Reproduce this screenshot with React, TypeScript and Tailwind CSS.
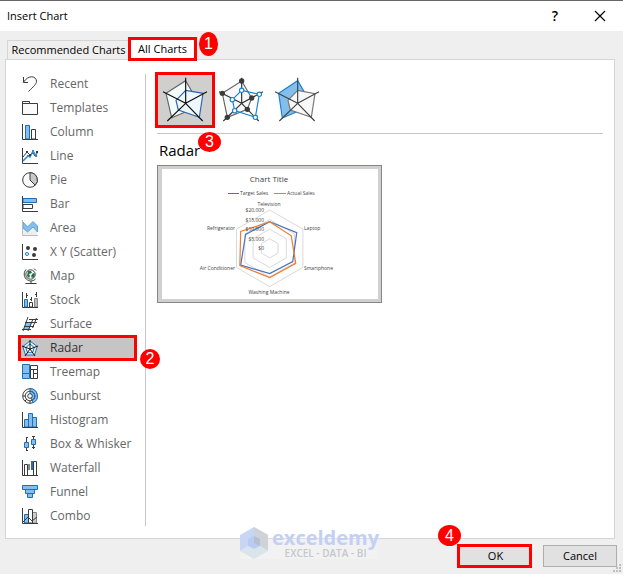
import clsx from "clsx";
import { useState, type ReactNode } from "react";

const INK = "#3b3b3b";
const BLUE = "#1e6fb8";
const SKY = "#83beec";

const chartTypes: { name: string; icon: ReactNode }[] = [
  {
    name: "Recent",
    icon: <path d="M1.500 1v5.500H6M1.500 6.200C4 2.500 7 .8 9.500.8c3 0 5 2 5 4.400 0 3-3 5.300-8 10.300" />,
  },
  {
    name: "Templates",
    icon: (
      <>
        <path d="M.5 1.500h7v2h8v11H.5z" fill="#fafafa" />
        <path d="M.5 3.500h7" />
      </>
    ),
  },
  {
    name: "Column",
    icon: (
      <>
        <path d="M3.500 15V1.500h4V15z" fill={SKY} stroke={BLUE} />
        <path d="M9.500 15V5.500h4V15z" fill="#fff" />
        <path d="M.5 0v15.500H16" />
      </>
    ),
  },
  {
    name: "Line",
    icon: (
      <>
        <path d="m1 9 4-5 3 3 3-2 2 3 3-4" />
        <path d="m1 13 5-5 2 1 3-6 3 5 1-1" stroke="#2b8bd6" strokeWidth="1.5" />
        <path d="M4 3h2v2H4zM7 6h2v2H7zM14 3h2v2h-2z" fill={INK} stroke="none" />
        <path d="M5 7h2v2H5zM10 2h2v2h-2zM13 7h2v2h-2z" fill="#2b8bd6" stroke="none" />
        <path d="M.5 0v15.500H16" />
      </>
    ),
  },
  {
    name: "Pie",
    icon: (
      <>
        <circle cx="8" cy="8" r="7.300" fill="#fafafa" />
        <path d="M8 .7V8l5.200 5.200A7.300 7.300 0 0 0 8 .7z" fill="#c8c8c8" />
      </>
    ),
  },
  {
    name: "Bar",
    icon: (
      <>
        <path d="M1 2.500h13.500v4H1z" fill={SKY} stroke={BLUE} />
        <path d="M1 8.500h9.500v4H1z" fill="#fff" />
        <path d="M.5 0v15.500H16" />
      </>
    ),
  },
  {
    name: "Area",
    icon: (
      <>
        <path d="M1 8l4 4 5-5 5 4v4H1z" fill="#eee" stroke="none" />
        <path d="m1 2 4.500 5L11 1.500 15.500 6v6L11 7l-5.500 5L1 8z" fill={SKY} stroke="#5fa5dc" />
        <path d="M.5 0v15.500H16" stroke="#bbb" />
      </>
    ),
  },
  {
    name: "X Y (Scatter)",
    icon: (
      <>
        <g fill={INK} stroke="none">
          <circle cx="6" cy="4" r="2" />
          <circle cx="13" cy="5" r="2" />
          <circle cx="12" cy="11" r="2" />
        </g>
        <circle cx="5" cy="10" r="1.600" fill="#cfe8fa" stroke="#2b8bd6" />
        <path d="M.5 0v15.500H16" />
      </>
    ),
  },
  {
    name: "Map",
    icon: (
      <>
        <circle cx="8.500" cy="6.500" r="4.700" fill="#fff" />
        <path d="M6 3l3 0 1 2-3 1 1 2-1 2-2-2zM11 5l2 1-1 3-2 1-1-2z" fill="#217346" stroke="none" />
        <path d="M4 1.500C1 5 2 10 5.500 12c3 1.700 6 1 8-1M9 13v2M3.500 15.500h11M12 .5l2 2" />
      </>
    ),
  },
  {
    name: "Stock",
    icon: (
      <>
        <path d="M2.500 15V7.500h3V15z" fill={SKY} stroke={BLUE} />
        <path d="M7.500 15v-4.500h3V15z" fill="#fff" />
        <path d="M12.500 15V6.500h3V15z" fill="#bbb" stroke="#888" />
        <path d="M4.500 1v5M4.500 3.500H6M9.500 5v4M9.500 7.500H8M14.500 0v5M13 2.500h1.500" />
        <path d="M.5 0v15.500H16" />
      </>
    ),
  },
  {
    name: "Surface",
    icon: (
      <>
        <path d="M4 6.500h6L7 13.500H1z" fill={SKY} stroke="none" />
        <path d="M7 3.500h9M3 6.500h12M2 10.500h10M0 13.500h9" />
        <path d="M6 1 1 15M11 3 6 15M14.500 2l-4 10" />
      </>
    ),
  },
  {
    name: "Radar",
    icon: (
      <>
        <path d="M8 1l7.200 5.500-2.700 8.500H3.500L.8 6.500z" fill="#e8f3fb" stroke={BLUE} />
        <path d="M8 4l4.200 3.500-1.600 5.200H5.400L3.800 7.500z" fill="#fff" stroke={BLUE} />
        <path d="M8 0v9M0 6l8 3 8-3M3 16l5-7 5 7" stroke="#111" />
      </>
    ),
  },
  {
    name: "Treemap",
    icon: (
      <>
        <path d="M8.500 1.500h7v4h-7zM8.500 5.500h3v9h-3zM11.500 5.500h4v4h-4zM11.500 9.500h4v5h-4z" fill="#fff" />
        <path d="M.5.5h7v9h-7zM.5 9.500h7v5h-7z" fill={SKY} stroke={BLUE} />
      </>
    ),
  },
  {
    name: "Sunburst",
    icon: (
      <>
        <circle cx="8" cy="8" r="7.300" fill="#fff" />
        <path d="M8 .7a7.300 7.300 0 0 1 3 14L8 8z" fill={SKY} stroke={BLUE} />
        <circle cx="8" cy="8" r="4.800" fill="none" />
        <path d="M8 3.200a4.800 4.800 0 0 1 2 9.200" stroke={BLUE} />
        <circle cx="8" cy="8" r="2.300" fill="#fff" />
        <path d="M1 8h2.500M3 13l2-2M8 13v2.500" />
      </>
    ),
  },
  {
    name: "Histogram",
    icon: (
      <>
        <path d="M2.500 15V7.500h4V15zM6.500 15V1.500h4V15zM10.500 15V5.500h4V15z" fill={SKY} stroke={BLUE} />
        <path d="M.5 0v15.500H16" />
      </>
    ),
  },
  {
    name: "Box & Whisker",
    icon: (
      <>
        <path d="M4.500 1v14M11.500 0v13M4 1.500h2M4 14.500h2M10 .5h3M10 11.500h3" />
        <path d="M2.500 6.500h4v5h-4zM9.500 3.500h4v5h-4z" fill={SKY} stroke={BLUE} />
      </>
    ),
  },
  {
    name: "Waterfall",
    icon: (
      <>
        <path d="M2.500 15V4.500h3V15" fill="#fff" />
        <path d="M6 4h2v6H6z" fill="#888" stroke="none" />
        <path d="M9 1h2v9H9z" fill={BLUE} stroke="none" />
        <path d="M11.500 15V1.500h3V15" fill="#fff" />
        <path d="M.5 0v15.500H16" />
      </>
    ),
  },
  {
    name: "Funnel",
    icon: (
      <path d="M.5 1.500h15v4H.5zM3.500 5.500h9v4h-9zM5.500 9.500h5v4h-5z" fill={SKY} stroke={BLUE} />
    ),
  },
  {
    name: "Combo",
    icon: (
      <>
        <path d="M2.500 15V6.500h4V15z" fill={SKY} stroke={BLUE} />
        <path d="M10.500 15V4.500h4V15z" fill="#ccc" stroke="#888" />
        <path d="M6.500 15V1.500h4V15z" fill="#fff" />
        <path d="m1 14 5-5 4 4 5-4" />
        <path d="M.5 0v15.500H16" />
      </>
    ),
  },
];

const axes = "M107 115V38M107 115l64-35M107 115l51 53M107 115l-55 53M107 115L39 80";

const subtypes = [
  {
    name: "Radar",
    drawing: (
      <>
        <path d="M107 47l32 56-17 31-57 24-17-73z" fill="#f4fbfb" stroke="#666" />
        <path d="M107 76l52 9-11 72-63-22-7-29z" fill="#eef7fb" stroke="#2e63b8" />
        <path d={axes} stroke="#111" />
      </>
    ),
  },
  {
    name: "Radar with Markers",
    drawing: (
      <>
        <path d="M107 48l30 51-13 34-60 24-15-72z" fill="#f8f8f8" stroke="#666" />
        <path d={axes} stroke="#333" />
        <path d="M107 76l53 12-12 69-62-20-7-33z" stroke="#1a84cf" />
        <g fill="#3b3b3b" stroke="none">
          <circle cx="107" cy="48" r="8" />
          <circle cx="137" cy="99" r="8" />
          <circle cx="124" cy="133" r="8" />
          <circle cx="64" cy="157" r="8" />
          <circle cx="49" cy="85" r="8" />
        </g>
        <g fill="#fff" stroke="#1a84cf">
          <circle cx="107" cy="76" r="6.500" />
          <circle cx="160" cy="88" r="6.500" />
          <circle cx="148" cy="157" r="6.500" />
          <circle cx="86" cy="137" r="6.500" />
          <circle cx="79" cy="104" r="6.500" />
        </g>
      </>
    ),
  },
  {
    name: "Filled Radar",
    drawing: (
      <>
        <path d="M107 47l30 51-13 34-63 27-11-74z" fill={SKY} stroke="#1a84cf" />
        <path d="M107 76l52 10-11 71-63-22-7-29z" fill="#f8f8f8" stroke="#777" />
        <path d={axes} stroke="#444" />
      </>
    ),
  },
];

const series = [
  { name: "Target Sales", color: "#4472c4", values: [13900, 16300, 13900, 13200, 17500, 14500] },
  { name: "Actual Sales", color: "#ed7d31", values: [13900, 13000, 15700, 15300, 18000, 17500] },
];

const CX = 107.7;
const CY = 79.3;
const RADIUS = 38.3;

const hexagon = (values: number[]) =>
  values
    .map((value, i) => {
      const r = (value / 20000) * RADIUS;
      const angle = (i * Math.PI) / 3;
      return `${CX + r * Math.sin(angle)},${CY - r * Math.cos(angle)}`;
    })
    .join(" ");

const RadarPreview = () => (
  <svg viewBox="0 0 216 130" width="216" height="130" className="bg-white" fill="#444" fontSize="5">
    <text x="107" y="13" fontSize="8" textAnchor="middle">
      Chart Title
    </text>
    <path d="M66 24.500h11" stroke="#4472c4" />
    <text x="78" y="26">
      Target Sales
    </text>
    <path d="M112 24.500h12" stroke="#ed7d31" />
    <text x="125" y="26">
      Actual Sales
    </text>

    {[5000, 10000, 15000, 20000].map((level) => (
      <polygon key={level} points={hexagon(Array(6).fill(level))} fill="none" stroke="#d9d9d9" />
    ))}
    {series.map((s) => (
      <polygon key={s.name} points={hexagon(s.values)} fill="none" stroke={s.color} strokeWidth="1.2" />
    ))}

    <g textAnchor="end">
      <text x="102" y="43">$20,000</text>
      <text x="102" y="53">$15,000</text>
      <text x="102" y="62">$10,000</text>
      <text x="102" y="72">$5,000</text>
      <text x="102" y="81">$0</text>
      <text x="73" y="61">Refrigerator</text>
      <text x="73" y="101">Air Conditioner</text>
    </g>
    <text x="107" y="37" textAnchor="middle">Television</text>
    <text x="142" y="61">Laptop</text>
    <text x="142" y="101">Smartphone</text>
    <text x="107" y="125" textAnchor="middle">Washing Machine</text>
  </svg>
);

const Step = ({ n, className }: { n: number; className: string }) => (
  <span
    className={clsx(
      "pointer-events-none absolute z-10 flex items-center justify-center rounded-[50%] bg-[#fe0000] font-['Liberation_Sans'] text-base leading-none text-white",
      className,
    )}
  >
    {n}
  </span>
);

const Watermark = () => (
  <div className="pointer-events-none absolute bottom-[15px] left-[240px] flex h-8 items-center gap-1 bg-white/20">
    <svg viewBox="0 0 28 32" width="28" height="32">
      <path d="M14 0 28 8 14 16 0 24V8z" fill="#c8d6f6" />
      <path d="M14 0 28 8v16l-8-5V12l-6-3z" fill="#cfd3d8" />
      <path d="M0 24l8-5 6 3 6-3 8 5-14 8z" fill="#d9e5ea" />
      <path d="M14 9l6 3v7l-6 3-6-3v-7z" fill="#b9cbf2" />
      <path d="M14 9l6 3v7l-6-3z" fill="#b5bfd0" />
    </svg>
    <div className="flex flex-col items-center">
      <span className="text-xl leading-5 font-bold text-[#c3d0f3]">exceldemy</span>
      <span className="text-[10px] leading-[10px] font-semibold text-[#c4c8cc]">EXCEL - DATA - BI</span>
    </div>
  </div>
);

export default function App() {
  const [tab, setTab] = useState("All Charts");
  const [type, setType] = useState("Radar");
  const [subtype, setSubtype] = useState("Radar");

  return (
    <div className="relative flex min-h-screen flex-col border-t border-[#666] bg-[#efefef] font-['Open_Sans',sans-serif] text-[11px] text-black">
      <header className="flex h-[30px] items-center justify-between bg-white pr-[17px] pl-[7px]">
        <h1>Insert Chart</h1>
        <div className="flex items-center gap-9">
          <button aria-label="Help" className="text-sm font-semibold">
            ?
          </button>
          <button aria-label="Close">
            <svg width="12" height="12" viewBox="0 0 12 12" stroke="#000" strokeWidth="1.2">
              <path d="m1 1 10 10M11 1 1 11" />
            </svg>
          </button>
        </div>
      </header>

      <div role="tablist" className="flex h-7 items-end pl-[7px]">
        <button
          role="tab"
          aria-selected={tab === "Recommended Charts"}
          onClick={() => setTab("Recommended Charts")}
          className="h-[19px] w-[122px] border-t border-l border-[#d5d5d5] text-center whitespace-nowrap"
        >
          Recommended Charts
        </button>
        <div className="relative z-10">
          <button
            role="tab"
            aria-selected={tab === "All Charts"}
            onClick={() => setTab("All Charts")}
            className="-mb-px flex h-[22px] w-[67px] items-center justify-center bg-white whitespace-nowrap outline-3 -outline-offset-2 outline-[#fe0000]"
          >
            All Charts
          </button>
          <Step n={1} className="-top-[6px] left-[70px] h-6 w-[19px]" />
        </div>
      </div>

      <main className="mr-2 ml-[5px] flex flex-1 border border-[#d5d5d5] bg-white pt-3 pb-[10px]">
        <nav className="w-[139px] shrink-0 pr-[9px] pl-[13px] text-xs">
          {chartTypes.map(({ name, icon }) => (
            <div key={name} className="relative">
              <button
                onClick={() => setType(name)}
                className={clsx(
                  "flex h-6 w-full items-center gap-3 pl-[3px] whitespace-nowrap",
                  type === name
                    ? "bg-[#c6c5c3] text-[#333] outline-3 -outline-offset-2 outline-[#fe0000]"
                    : "text-[#666]",
                )}
              >
                <svg width="16" height="16" viewBox="0 0 16 16" fill="none" stroke={INK} className="shrink-0">
                  {icon}
                </svg>
                {name}
              </button>
              {name === "Radar" && <Step n={2} className="top-[13px] -right-6 size-5" />}
            </div>
          ))}
        </nav>

        <div className="my-[2px] w-px bg-[#c6c6c6]" />

        <section className="mx-[11px] flex-1 pt-[2px]">
          <div className="relative flex border-b border-[#c6c6c6] pb-[7px]">
            {subtypes.map(({ name, drawing }) => (
              <button
                key={name}
                aria-label={name}
                onClick={() => setSubtype(name)}
                className={clsx(
                  "flex h-[52px] w-14 items-center justify-center",
                  subtype === name && "bg-[#d0cfcd] outline-3 -outline-offset-1 outline-[#fe0000]",
                )}
              >
                <svg viewBox="33 36 144 138" width="48" height="46" fill="none" strokeWidth="3.5">
                  {drawing}
                </svg>
              </button>
            ))}
            <Step n={3} className="top-[58px] left-[41px] h-5 w-[23px]" />
          </div>

          <h2 className="mt-1 pl-[2px] text-[15px] leading-6">Radar</h2>

          <button
            aria-label="Radar chart preview"
            className="mt-[3px] flex h-[138px] w-[225px] items-center justify-center border border-[#888883] bg-[#d0d0d0]"
          >
            <RadarPreview />
          </button>
        </section>
      </main>

      <footer className="flex h-[35px] items-start justify-end gap-3 pt-[6px] pr-[6px]">
        <div className="relative">
          <button className="h-[22px] w-[73px] border-l-2 border-[#0078d7] bg-[#e1e1e1] outline-3 -outline-offset-2 outline-[#fe0000]">
            OK
          </button>
          <Step n={4} className="-top-5 -left-5 h-[21px] w-[23px]" />
        </div>
        <button className="h-[22px] w-[74px] border border-[#adadad] bg-[#e1e1e1]">Cancel</button>
      </footer>

      <Watermark />

      <svg width="8" height="8" viewBox="0 0 8 8" fill="#bfbfbf" className="absolute right-[2px] bottom-[2px]">
        <path d="M6 0h2v2H6zM3 3h2v2H3zM6 3h2v2H6zM0 6h2v2H0zM3 6h2v2H3zM6 6h2v2H6z" />
      </svg>
    </div>
  );
}
